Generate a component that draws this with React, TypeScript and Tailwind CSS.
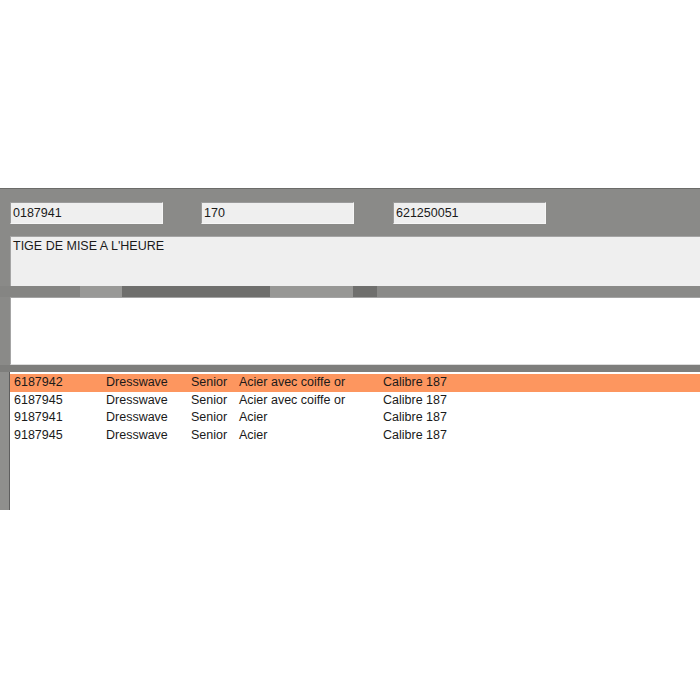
import React from 'react';

const fields = ['0187941', '170', '621250051'];

const rows = [
  { ref: '6187942', model: 'Dresswave', size: 'Senior', material: 'Acier avec coiffe or', calibre: 'Calibre 187', selected: true },
  { ref: '6187945', model: 'Dresswave', size: 'Senior', material: 'Acier avec coiffe or', calibre: 'Calibre 187' },
  { ref: '9187941', model: 'Dresswave', size: 'Senior', material: 'Acier', calibre: 'Calibre 187' },
  { ref: '9187945', model: 'Dresswave', size: 'Senior', material: 'Acier', calibre: 'Calibre 187' },
];

// background artwork bands showing between the boxes
const bands = [
  { w: 80, c: 'bg-[#858583]' },
  { w: 42, c: 'bg-[#999997]' },
  { w: 148, c: 'bg-[#6f6f6d]' },
  { w: 83, c: 'bg-[#979795]' },
  { w: 24, c: 'bg-[#6f6f6d]' },
  { w: 323, c: 'bg-[#8a8a88]' },
];

export default function App() {
  return (
    <div className="w-[700px] h-[700px] bg-white flex flex-col font-['Liberation_Sans',Arial,sans-serif] text-[12.5px] text-[#1a1a1a]">
      <div className="h-[188px]" />

      <div className="h-[322px] flex flex-col bg-[#8a8a88] border-t border-[#6b6b69]">
        {/* top edit fields */}
        <div className="flex pl-[10px] pt-[13px] gap-[38px] h-[47px]">
          {fields.map((f, i) => (
            <div
              key={f}
              className={`h-[22px] w-[153px] ${i === 2 ? 'ml-[1px]' : ''} bg-[#efefef] border-t border-l border-[#9b9b9b] border-b border-r border-b-[#f6f6f6] border-r-[#f6f6f6] pl-[2px] leading-[20px]`}
            >
              {f}
            </div>
          ))}
        </div>

        {/* designation memo */}
        <div className="ml-[10px] h-[50px] bg-[#efefef] border-t border-l border-[#a4a4a4] px-[2px] pt-[2px] leading-[15px]">
          TIGE DE MISE A L'HEURE
        </div>

        <div className="flex h-[11px]">
          {bands.map((b, i) => (
            <div key={i} className={`${b.c} h-full`} style={{ width: b.w }} />
          ))}
        </div>

        {/* notes area */}
        <div className="ml-[10px] h-[68px] bg-white border-t border-l border-[#a4a4a4] border-b border-b-[#dcdcdc]" />

        <div className="h-[7px] bg-[#7e7e7c]" />

        {/* article list */}
        <div className="flex flex-1 min-h-0">
          <div className="w-[10px] bg-[#8f8f8d] border-r border-[#5e5e5e]" />
          <div className="flex-1 bg-white pt-[2px]">
            {rows.map((r) => (
              <div
                key={r.ref}
                className={`flex h-[17.5px] leading-[17.5px] ${r.selected ? 'bg-[#fd965f]' : ''}`}
              >
                <span className="w-[96px] pl-[4px]">{r.ref}</span>
                <span className="w-[85px]">{r.model}</span>
                <span className="w-[48px]">{r.size}</span>
                <span className="w-[144px]">{r.material}</span>
                <span>{r.calibre}</span>
              </div>
            ))}
          </div>
        </div>
      </div>
    </div>
  );
}
